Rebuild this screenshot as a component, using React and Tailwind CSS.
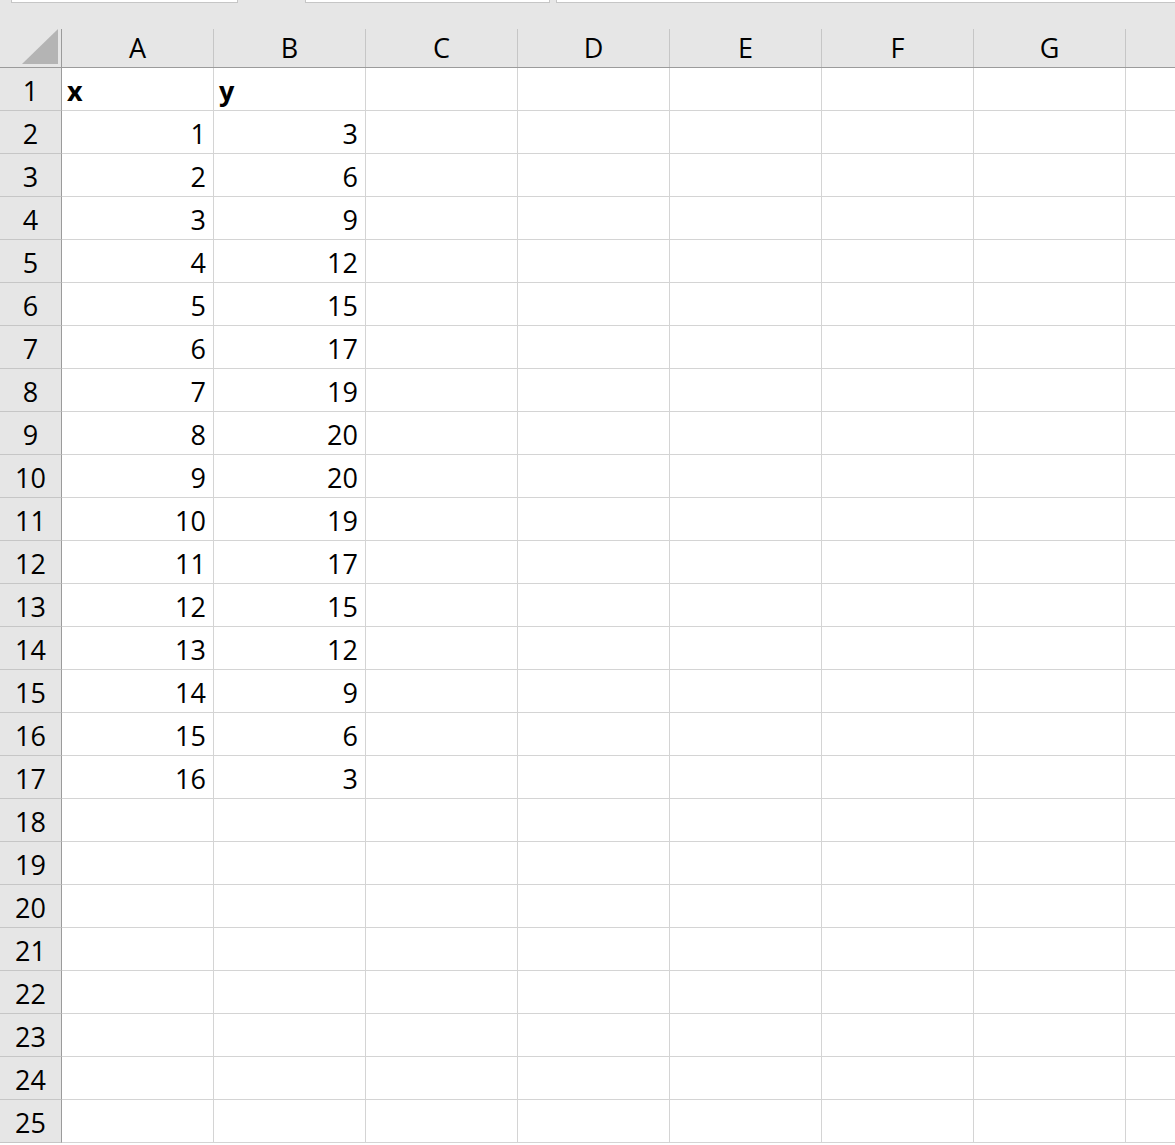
import React from "react";

const COLS = ["A", "B", "C", "D", "E", "F", "G", ""];
const DATA = [
  [1, 3], [2, 6], [3, 9], [4, 12], [5, 15], [6, 17], [7, 19], [8, 20],
  [9, 20], [10, 19], [11, 17], [12, 15], [13, 12], [14, 9], [15, 6], [16, 3],
];
const ROWS = 25;

function cellValue(r, c) {
  if (r === 0) {
    if (c === 0) return { text: "x", bold: true };
    if (c === 1) return { text: "y", bold: true };
    return null;
  }
  const d = DATA[r - 1];
  if (d && c < 2) return { text: String(d[c]), bold: false };
  return null;
}

export default function App() {
  return (
    <div
      className="w-[1175px] h-[1145px] overflow-hidden bg-white text-black"
      style={{ fontFamily: '"Open Sans", "Noto Sans", sans-serif' }}
    >
      {/* ribbon tab edges peeking at the top */}
      <div className="flex h-[3px] bg-[#e6e6e6]">
        <div className="ml-[11px] w-[227px] h-[3px] bg-white border border-t-0 border-[#c6c6c6]" />
        <div className="ml-[67px] w-[245px] h-[3px] bg-white border border-t-0 border-[#c6c6c6]" />
        <div className="ml-[6px] flex-1 h-[3px] bg-white border border-t-0 border-r-0 border-[#c6c6c6]" />
      </div>

      {/* column headers */}
      <div className="flex h-[65px] bg-[#e6e6e6] border-b border-[#9b9b9b]">
        <div className="w-[62px] shrink-0 flex items-end">
          <div className="w-full h-[38px] flex items-end justify-end border-r border-[#9b9b9b]">
            <svg width="36" height="35" viewBox="0 0 36 35" className="mr-[3px] mb-[3px]">
              <polygon points="36,0 36,35 0,35" fill="#b4b4b4" />
            </svg>
          </div>
        </div>
        {COLS.map((c, i) => (
          <div key={i} className="w-[152px] shrink-0 flex items-end">
            <div
              className={`w-full h-[38px] flex items-center justify-center text-[27px] leading-none ${
                i < COLS.length - 1 ? "border-r border-[#c6c6c6]" : ""
              }`}
            >
              <span className="pb-[1px]">{c}</span>
            </div>
          </div>
        ))}
      </div>

      {/* grid rows */}
      {Array.from({ length: ROWS }, (_, r) => (
        <div key={r} className="flex h-[43px]">
          <div className="w-[62px] shrink-0 bg-[#e6e6e6] border-r border-b border-r-[#9b9b9b] border-b-[#c6c6c6] flex items-center justify-center text-[27px] leading-none">
            <span className="pt-[2px]">{r + 1}</span>
          </div>
          {COLS.map((_, c) => {
            const v = cellValue(r, c);
            return (
              <div
                key={c}
                className={`w-[152px] shrink-0 border-b border-[#d4d4d4] flex items-center text-[27px] leading-none ${
                  c < COLS.length - 1 ? "border-r" : ""
                } ${v && v.bold ? "justify-start pl-[5px] font-bold" : "justify-end pr-[7px]"}`}
              >
                {v ? <span className="pt-[3px]">{v.text}</span> : null}
              </div>
            );
          })}
        </div>
      ))}
    </div>
  );
}
